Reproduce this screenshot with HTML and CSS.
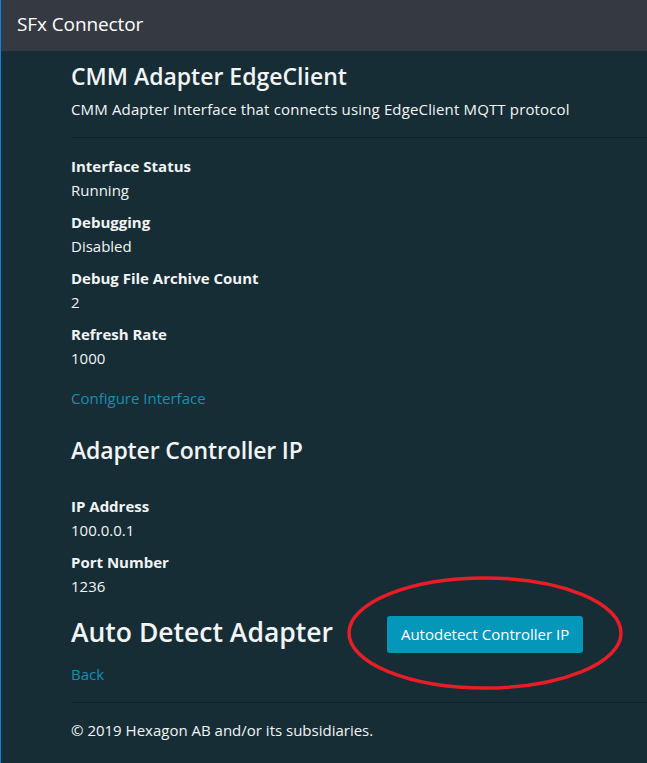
FILE: index.html
```html
<!DOCTYPE html>
<html lang="en">
<head>
<meta charset="utf-8">
<title>SFx Connector</title>
<link rel="stylesheet" href="styles.css">
</head>
<body>
<div class="page">
  <header class="topbar">
    <span class="brand">SFx Connector</span>
  </header>
  <main class="content">
    <h3 class="title">CMM Adapter EdgeClient</h3>
    <p class="lead">CMM Adapter Interface that connects using EdgeClient MQTT protocol</p>
    <hr class="rule">
    <dl class="props">
      <dt>Interface Status</dt><dd>Running</dd>
      <dt>Debugging</dt><dd>Disabled</dd>
      <dt>Debug File Archive Count</dt><dd>2</dd>
      <dt>Refresh Rate</dt><dd>1000</dd>
    </dl>
    <a class="link" href="#">Configure Interface</a>
    <h3 class="section">Adapter Controller IP</h3>
    <dl class="props">
      <dt>IP Address</dt><dd>100.0.0.1</dd>
      <dt>Port Number</dt><dd>1236</dd>
    </dl>
    <div class="detect">
      <h2 class="detect-title">Auto Detect Adapter</h2>
      <div class="btn-wrap">
        <button class="btn" type="button">Autodetect Controller IP</button>
        <svg class="ring" width="276" height="114" viewBox="0 0 276 114" aria-hidden="true">
          <ellipse cx="138" cy="57" rx="136" ry="55" fill="none" stroke="#e81d25" stroke-width="3.5"/>
        </svg>
      </div>
    </div>
    <a class="link back" href="#">Back</a>
  </main>
  <footer class="footer">
    <p>© 2019 Hexagon AB and/or its subsidiaries.</p>
  </footer>
</div>
</body>
</html>
```
FILE: styles.css
```css
* { box-sizing: border-box; }
html, body {
  margin: 0;
  padding: 0;
  height: 100%;
}
body {
  background: #162d36;
  color: #f2f4f5;
  font-family: "Open Sans", "Noto Sans", sans-serif;
  font-size: 15px;
  line-height: 24px;
}
.page {
  min-height: 100%;
  border-left: 1px solid #1a7fd6;
}
.topbar {
  height: 51px;
  background: #353a42;
  display: flex;
  align-items: center;
  padding: 0 0 4px 16px;
}
.brand {
  font-size: 19px;
  color: #fff;
  letter-spacing: -0.1px;
}
.content {
  padding: 7px 0 0 70px;
}
.title {
  margin: 0;
  font-size: 23px;
  font-weight: 600;
  line-height: 36px;
}
.lead {
  margin: 3px 0 0;
  letter-spacing: 0.15px;
}
.rule {
  border: 0;
  border-top: 1px solid #0f2128;
  margin: 16px 0 0;
}
.props {
  margin: 16px 0 0;
}
.props dt {
  font-weight: 700;
}
.props dd {
  margin: 0 0 8px;
}
.link {
  display: block;
  color: #1a8db0;
  text-decoration: none;
  margin-top: 16px;
}
.section {
  margin: 22px 0 0;
  font-size: 23px;
  font-weight: 600;
  line-height: 36px;
  letter-spacing: -0.15px;
}
.section + .props { margin-top: 26px; }
.detect {
  display: flex;
  align-items: center;
  gap: 54px;
  margin-top: 12px;
}
.detect-title {
  margin: 0;
  font-size: 26.5px;
  font-weight: 600;
  line-height: 36px;
}
.btn-wrap {
  position: relative;
  display: flex;
  margin-top: 6px;
}
.btn {
  font: inherit;
  color: #fff;
  background: #0597b9;
  border: 0;
  border-radius: 3px;
  height: 37px;
  padding: 0 14px;
  line-height: 37px;
}
.ring {
  position: absolute;
  left: -40px;
  top: -40px;
  pointer-events: none;
}
.back {
  margin-top: 9px;
}
.footer {
  margin-top: 16px;
  border-top: 1px solid #0f2128;
  margin-left: 70px;
}
.footer p {
  margin: 0;
  padding: 15px 0 0;
  line-height: 24px;
}
```
